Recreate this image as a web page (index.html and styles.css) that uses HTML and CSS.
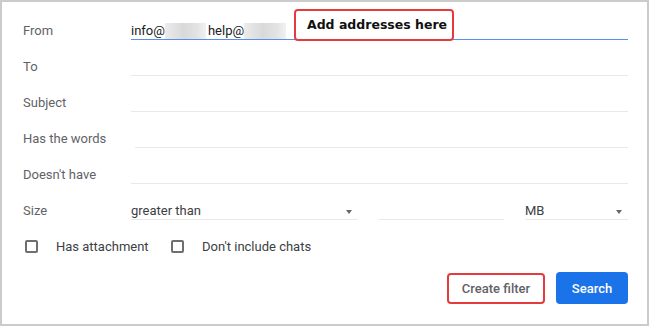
FILE: index.html
```html
<!DOCTYPE html>
<html lang="en">
<head>
    <meta charset="UTF-8">
    <title>Search filter</title>
    <link rel="stylesheet" href="styles.css">
</head>
<body>
    <div class="frame">
        <div class="row">
            <span class="label">From</span>
            <div class="field active">info@<span class="blur wide"></span>help@<span class="blur"></span></div>
            <div class="callout">Add addresses here</div>
        </div>
        <div class="row">
            <span class="label">To</span>
            <div class="field"></div>
        </div>
        <div class="row">
            <span class="label">Subject</span>
            <div class="field"></div>
        </div>
        <div class="row">
            <span class="label">Has the words</span>
            <div class="field shifted"></div>
        </div>
        <div class="row">
            <span class="label">Doesn't have</span>
            <div class="field"></div>
        </div>
        <div class="row">
            <span class="label">Size</span>
            <div class="size-fields">
                <div class="field select">greater than<span class="arrow"></span></div>
                <div class="field"></div>
                <div class="field select">MB<span class="arrow"></span></div>
            </div>
        </div>
        <div class="checks">
            <label class="check first"><span class="box"></span>Has attachment</label>
            <label class="check"><span class="box"></span>Don't include chats</label>
        </div>
        <div class="actions">
            <button class="btn-filter">Create filter</button>
            <button class="btn-search">Search</button>
        </div>
    </div>
</body>
</html>
```

FILE: styles.css
```css
body {
    margin: 0;
    font-family: Roboto, Arial, sans-serif;
    font-size: 13px;
    background: #fff;
}
.frame {
    position: relative;
    box-sizing: border-box;
    width: 649px;
    height: 326px;
    border: 2px solid #cbcbcb;
    padding: 2px 19px 0 21px;
}
.row {
    display: grid;
    grid-template-columns: 108px 1fr;
    align-items: end;
    height: 36px;
}
.label {
    color: #5f6368;
    line-height: 18px;
}
.field {
    position: relative;
    display: flex;
    align-items: center;
    height: 16px;
    padding-top: 2px;
    line-height: 18px;
    color: #202124;
    border-bottom: 1px solid #e9e9e9;
}
.field.active {
    border-bottom-color: #5b8ee8;
}
.field.shifted {
    margin-left: 4px;
}
.blur {
    display: inline-block;
    width: 42px;
    height: 16px;
    margin: 0 1px 0 0;
    background: linear-gradient(90deg, #ececec, #d9d9d9 45%, #e4e4e4 80%, #f2f2f2);
    filter: blur(0.6px);
}
.blur.wide {
    width: 41px;
    margin: 0 2px 0 0;
}
.callout {
    position: absolute;
    left: 292px;
    top: 7px;
    box-sizing: border-box;
    width: 160px;
    height: 32px;
    padding-left: 11px;
    border: 2px solid #e53b3f;
    border-radius: 4px;
    background: #fff;
    color: #111;
    font-family: "DejaVu Sans", Verdana, sans-serif;
    font-weight: bold;
    font-size: 12.5px;
    line-height: 28px;
}
.size-fields {
    display: grid;
    grid-template-columns: 227px 125px 103px;
    column-gap: 21px;
}
.select {
    color: #3c4043;
}
.arrow {
    position: absolute;
    right: 6px;
    top: 9px;
    width: 0;
    height: 0;
    border-left: 3.5px solid transparent;
    border-right: 3.5px solid transparent;
    border-top: 4px solid #666;
}
.checks {
    display: flex;
    align-items: center;
    height: 36px;
    margin-top: 8px;
    padding-left: 2px;
}
.check {
    display: flex;
    align-items: center;
    gap: 18px;
    color: #3c4043;
}
.check.first {
    width: 146px;
}
.box {
    box-sizing: border-box;
    width: 13px;
    height: 13px;
    border: 2px solid #6f6f6f;
    border-radius: 2px;
}
.actions {
    display: flex;
    justify-content: flex-end;
    align-items: center;
    gap: 11px;
    margin-top: 8px;
}
.actions button {
    font-family: Roboto, Arial, sans-serif;
    font-size: 13px;
    font-weight: 500;
    border-radius: 4px;
    cursor: pointer;
}
.btn-filter {
    width: 98px;
    height: 31px;
    border: 2px solid #e53b3f;
    background: #fff;
    color: #5f6368;
}
.btn-search {
    width: 72px;
    height: 32px;
    border: none;
    background: #1a73e8;
    color: #fff;
    font-weight: bold;
}
```
